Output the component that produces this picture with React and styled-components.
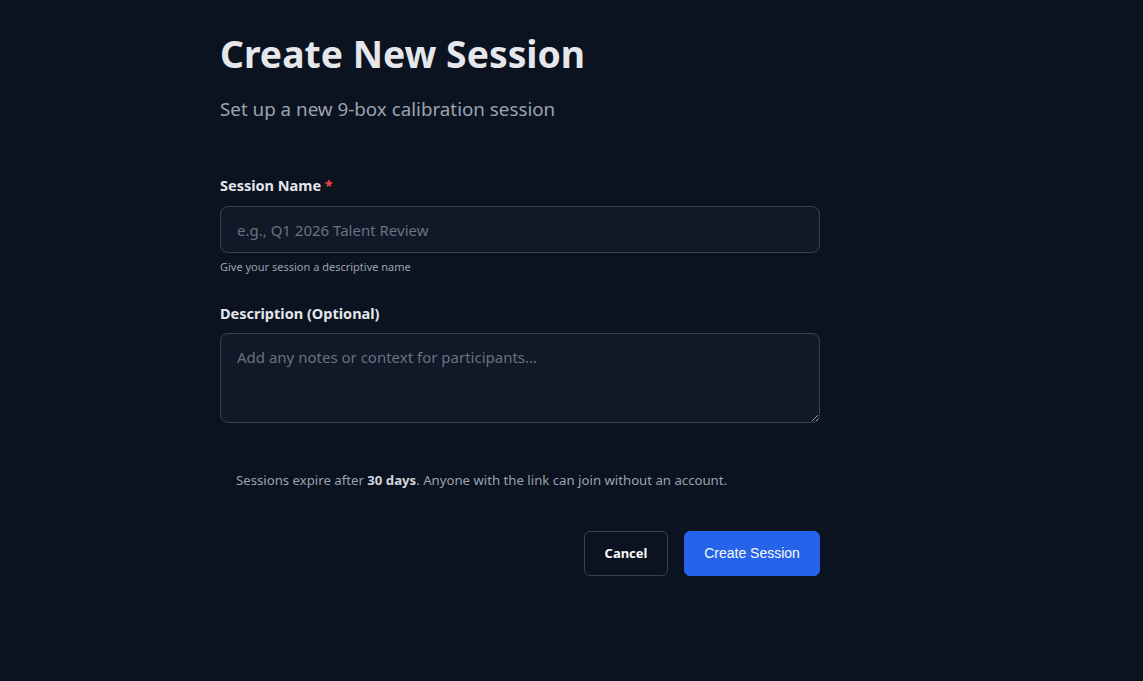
import React from 'react'
import styled, { createGlobalStyle } from 'styled-components'

const Global = createGlobalStyle`
  html, body {
    margin: 0;
    padding: 0;
    background: #0b1220;
    font-family: 'Noto Sans', 'Open Sans', sans-serif;
  }
  * { box-sizing: border-box; }
`

const Page = styled.main`
  min-height: 681px;
  background: #0b1220;
  padding: 26px 0 0 220px;
`

const Form = styled.form`
  width: 600px;
  display: flex;
  flex-direction: column;
`

const Title = styled.h1`
  margin: 0;
  font-size: 37.3px;
  line-height: 56px;
  font-weight: 700;
  color: #e5e7eb;
`

const Subtitle = styled.p`
  margin: 13px 0 0;
  font-size: 18.8px;
  line-height: 28px;
  color: #9ca3af;
`

const Field = styled.div`
  display: flex;
  flex-direction: column;
  margin-top: ${p => p.$top}px;
`

const Label = styled.label`
  font-size: 14.5px;
  font-weight: 700;
  line-height: 20px;
  color: #e5e7eb;
  margin-bottom: ${p => p.$gap ?? 11}px;
  span { color: #ef4444; }
`

const inputBase = `
  width: 100%;
  background: #111827;
  border: 1px solid #374151;
  border-radius: 8px;
  color: #e5e7eb;
  font-family: 'Noto Sans', 'Open Sans', sans-serif;
  font-size: 15px;
  padding: 0 16px;
  outline: none;
  &::placeholder { color: #6b7280; }
`

const Input = styled.input`
  ${inputBase}
  height: 47px;
`

const TextArea = styled.textarea`
  ${inputBase}
  height: 90px;
  padding-top: 12px;
  line-height: 22px;
  resize: vertical;
  display: block;
`

const Hint = styled.small`
  margin-top: 6px;
  font-size: 11px;
  line-height: 16px;
  color: #9ca3af;
`

const Note = styled.p`
  margin: 47px 0 0;
  padding-left: 16px;
  font-size: 13.2px;
  line-height: 20px;
  color: #9ca3af;
  b { color: #d1d5db; font-weight: 700; }
`

const Actions = styled.div`
  display: flex;
  justify-content: flex-end;
  gap: 16px;
  margin-top: 41px;
`

const Button = styled.button`
  height: 45px;
  border-radius: 6px;
  cursor: pointer;
  white-space: nowrap;
  padding: 0 0 1px;
  border: 1px solid ${p => (p.$primary ? '#2563eb' : '#374151')};
  background: ${p => (p.$primary ? '#2563eb' : 'transparent')};
  color: #f9fafb;
  font-family: ${p => (p.$primary ? "'Liberation Sans', Arial, sans-serif" : "'Noto Sans', sans-serif")};
  font-size: ${p => (p.$primary ? 14 : 13)}px;
  font-weight: ${p => (p.$primary ? 400 : 700)};
  width: ${p => (p.$primary ? 136 : 84)}px;
`

export default function App() {
  return (
    <Page>
      <Global />
      <Form onSubmit={e => e.preventDefault()}>
        <Title>Create New Session</Title>
        <Subtitle>Set up a new 9-box calibration session</Subtitle>

        <Field $top={52}>
          <Label htmlFor='name'>
            Session Name <span>*</span>
          </Label>
          <Input id='name' placeholder='e.g., Q1 2026 Talent Review' />
          <Hint>Give your session a descriptive name</Hint>
        </Field>

        <Field $top={28}>
          <Label htmlFor='desc' $gap={10}>
            Description (Optional)
          </Label>
          <TextArea id='desc' placeholder='Add any notes or context for participants...' />
        </Field>

        <Note>
          Sessions expire after <b>30 days</b>. Anyone with the link can join without an account.
        </Note>

        <Actions>
          <Button type='button'>Cancel</Button>
          <Button type='submit' $primary>
            Create Session
          </Button>
        </Actions>
      </Form>
    </Page>
  )
}
